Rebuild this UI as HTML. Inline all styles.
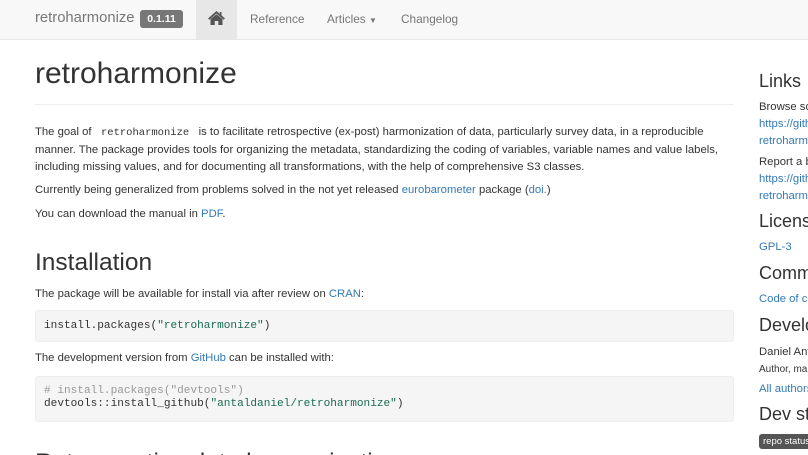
<!DOCTYPE html>
<html><head><meta charset="utf-8"><style>
*{margin:0;padding:0;box-sizing:border-box}
html,body{width:808px;height:455px;overflow:hidden}
body{background:#fff;font-family:"Liberation Sans",Arial,sans-serif;color:#333;font-size:11.4px;position:relative}
a{color:#337ab7;text-decoration:none}
.nav{position:absolute;left:0;top:0;width:808px;height:40px;background:#f8f8f8;border-bottom:1px solid #e7e7e7}
.nav span,.nav div{position:absolute}
.brand{left:35px;top:10px;font-size:14.8px;color:#777}
.lbl{left:140px;top:10px;width:43px;height:18px;background:#777;color:#fff;font-weight:bold;font-size:10.5px;text-align:center;line-height:18px;border-radius:3px}
.home{left:196px;top:0;width:41px;height:39px;background:#e7e7e7}
.ni{top:12px;color:#777;font-size:11.8px}
.a{position:absolute;white-space:nowrap}
p.a{font-size:11.3px;line-height:17px}
h1.a{font-weight:normal;font-size:30px;color:#333}
h2.a{font-weight:normal;font-size:24.5px;color:#333}
h3.a{font-weight:normal;font-size:18px;color:#333}
.code{position:absolute;left:35px;width:699px;background:#f5f5f5;border:1px solid #eee;border-radius:3px;font-family:"Liberation Mono",monospace;font-size:11.1px;line-height:13px;padding:0 8px}
.s{color:#1a6b55}
code{font-family:"Liberation Mono",monospace;font-size:10.5px}
.side{position:absolute;left:759px;top:60px;width:49px;height:395px;overflow:hidden}
.side .a{left:0}
</style></head><body>
<div class="nav">
<span class="brand">retroharmonize</span>
<div class="lbl">0.1.11</div>
<div class="home"><svg width="41" height="39" viewBox="0 0 41 39"><path d="M20.5 11 L12 18.5 L13.3 19.8 L20.5 13.5 L27.7 19.8 L29 18.5 L25.5 15.4 V12 H23.8 V13.9 Z" fill="#555"/><path d="M14.5 19 L20.5 14.2 L26.5 19 V25 H22.3 V21 H18.7 V25 H14.5 Z" fill="#555"/></svg></div>
<span class="ni" style="left:250px">Reference</span>
<span class="ni" style="left:327px">Articles <span style="position:static;font-size:8px">▼</span></span>
<span class="ni" style="left:401px">Changelog</span>
</div>

<h1 class="a" style="left:35px;top:57px">retroharmonize</h1>
<div style="position:absolute;left:35px;top:104px;width:699px;border-top:1px solid #eee"></div>
<p class="a" style="left:35px;top:124px">The goal of <code>&nbsp;retroharmonize&nbsp;</code> is to facilitate retrospective (ex-post) harmonization of data, particularly survey data, in a reproducible<br>manner. The package provides tools for organizing the metadata, standardizing the coding of variables, variable names and value labels,<br>including missing values, and for documenting all transformations, with the help of comprehensive S3 classes.</p>
<p class="a" style="left:35px;top:182px">Currently being generalized from problems solved in the not yet released <a>eurobarometer</a> package (<a>doi.</a>)</p>
<p class="a" style="left:35px;top:206px">You can download the manual in <a>PDF</a>.</p>
<h2 class="a" style="left:35px;top:249px">Installation</h2>
<p class="a" style="left:35px;top:286px">The package will be available for install via after review on <a>CRAN</a>:</p>
<div class="code" style="top:310px;height:32px;padding-top:9px">install.packages(<span class="s">"retroharmonize"</span>)</div>
<p class="a" style="left:35px;top:350px">The development version from <a>GitHub</a> can be installed with:</p>
<div class="code" style="top:376px;height:46px;padding-top:8px"><span style="color:#999"># install.packages("devtools")</span><br>devtools::install_github(<span class="s">"antaldaniel/retroharmonize"</span>)</div>
<h2 class="a" style="left:35px;top:449px">Retrospective data harmonization</h2>

<div class="side">
<h3 class="a" style="top:11px">Links</h3>
<p class="a" style="top:39px">Browse source code at<br><a>https://github.com/antaldaniel/</a><br><a>retroharmonize</a></p>
<p class="a" style="top:94px">Report a bug at<br><a>https://github.com/antaldaniel/</a><br><a>retroharmonize</a></p>
<h3 class="a" style="top:151px">License</h3>
<p class="a" style="top:179px"><a>GPL-3</a></p>
<h3 class="a" style="top:203px">Community</h3>
<p class="a" style="top:231px"><a>Code of conduct</a></p>
<h3 class="a" style="top:255px">Developers</h3>
<p class="a" style="top:284px">Daniel Antal</p>
<p class="a" style="top:301px;font-size:10px">Author, maintainer</p>
<p class="a" style="top:321px"><a>All authors...</a></p>
<h3 class="a" style="top:344px">Dev status</h3>
<div class="a" style="top:374px;height:15px;width:70px;background:#555;color:#fff;font-size:9.5px;line-height:15px;padding-left:4px;border-radius:3px">repo status</div>
</div>
</body></html>
